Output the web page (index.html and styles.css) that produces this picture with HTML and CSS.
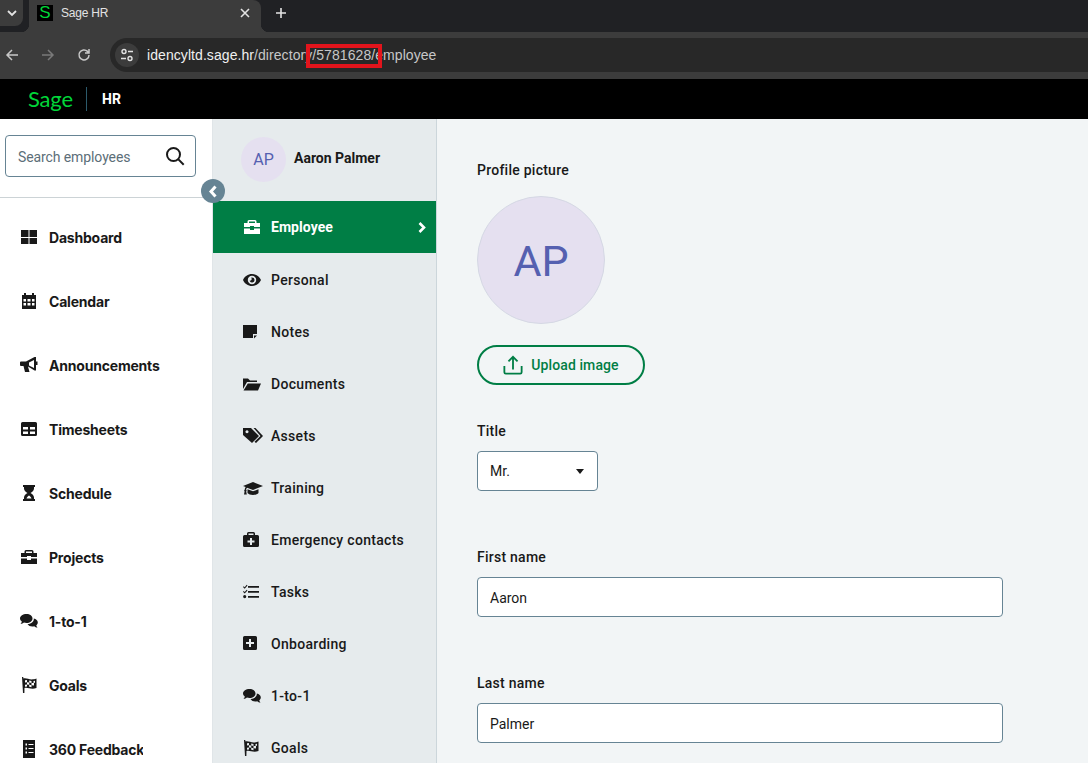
FILE: index.html
```html
<!DOCTYPE html>
<html lang="en">
<head>
<meta charset="utf-8">
<title>Sage HR</title>
<link rel="stylesheet" href="styles.css">
</head>
<body>
<div class="tabstrip">
  <div class="tabsearch"><svg width="12" height="12" viewBox="0 0 12 12"><path d="M2 4l4 4 4-4" fill="none" stroke="#e3e3e3" stroke-width="1.8"/></svg></div>
  <div class="tab">
    <span class="favicon">S</span>
    <span class="tabtitle">Sage HR</span>
    <svg class="tabclose" width="10" height="10" viewBox="0 0 10 10"><path d="M1 1l8 8M9 1l-8 8" stroke="#e3e3e3" stroke-width="1.6"/></svg>
  </div>
  <svg class="newtab" width="12" height="12" viewBox="0 0 12 12"><path d="M6 1v10M1 6h10" stroke="#e3e3e3" stroke-width="1.6"/></svg>
</div>
<div class="toolbar">
  <svg class="navicon" width="14" height="14" viewBox="0 0 14 14"><path d="M13 7H2M7 2L2 7l5 5" fill="none" stroke="#c7c7c7" stroke-width="1.5"/></svg>
  <svg class="navicon" width="14" height="14" viewBox="0 0 14 14"><path d="M1 7h11M7 2l5 5-5 5" fill="none" stroke="#7a7a7a" stroke-width="1.5"/></svg>
  <svg class="navicon" width="14" height="14" viewBox="0 0 14 14"><path d="M12 7a5 5 0 1 1-1.500-3.600L12 5M12 1v4H8" fill="none" stroke="#c7c7c7" stroke-width="1.500"/></svg>
  <div class="omnibox">
    <span class="sitechip"><svg width="14" height="14" viewBox="0 0 14 14"><g fill="none" stroke="#e3e3e3" stroke-width="1.400"><circle cx="4" cy="3.500" r="2"/><path d="M8 3.500h5M1 10.500h5"/><circle cx="10" cy="10.500" r="2"/></g></svg></span>
    <span class="url"><span class="domain">idencyltd.sage.hr</span>/directory/5781628/employee<span class="redact"></span></span>
  </div>
</div>
<header class="apphead">
  <span class="logo">Sage</span>
  <span class="logosep"></span>
  <span class="product">HR</span>
</header>
<div class="main">
  <aside class="sidebar">
    <div class="searchwrap">
      <div class="search">
        <span class="searchtext">Search employees</span>
        <svg width="20" height="20" viewBox="0 0 20 20"><circle cx="8.500" cy="8.500" r="6.500" fill="none" stroke="#191919" stroke-width="2"/><path d="M13.400 13.400l5.300 5.300" stroke="#191919" stroke-width="2"/></svg>
      </div>
    </div>
    <nav class="mainnav">
      <a class="mainitem"><svg class="ic" viewBox="0 0 18 18"><path d="M1 2h7.500v7h-7.500zM9.500 2H17v7H9.500zM1 10h7.500v6H1zM9.500 10H17v6H9.500z"/></svg>Dashboard</a>
      <a class="mainitem"><svg class="ic" viewBox="0 0 18 18"><path fill-rule="evenodd" d="M4 1h2v2h6V1h2v2h2v14H2V3h2zM3.500 7v2.500H6V7zM7.500 7v2.500H10.500V7zM12 7v2.500h2.500V7zM3.500 11v2.500H6V11zM7.500 11v2.500h3V11zM12 11v2.500h2.500V11z"/></svg>Calendar</a>
      <a class="mainitem"><svg class="ic" viewBox="0 0 18 18"><path fill-rule="evenodd" d="M0 6.500q0-1 1-1h5L14.500 1h1.500v4.500h1.500v3.500H16v5.500h-1.500L8 10.500l1.500 5.500H5l-1.500-6H1q-1 0-1-1zM9 6.500v3l5 2.500V4z"/></svg>Announcements</a>
      <a class="mainitem"><svg class="ic" viewBox="0 0 18 18"><path fill-rule="evenodd" d="M2.500 2h13Q17 2 17 3.500v11q0 1.500-1.500 1.500h-13Q1 16 1 14.500v-11Q1 2 2.500 2zM3 7v2.500h5V7zM10 7v2.500h5V7zM3 11.500V14h5v-2.500zM10 11.500V14h5v-2.500z"/></svg>Timesheets</a>
      <a class="mainitem"><svg class="ic" viewBox="0 0 18 18"><path d="M3 1h12v2h-1v1.500c0 2.500-2 3.500-3.500 4.500C12 10 14 11 14 13.500V15h1v2H3v-2h1v-1.500C4 11 6 10 7.500 9 6 8 4 7 4 4.500V3H3zM6.500 14.500h5C11 13 10 12 9 11.500 8 12 7 13 6.500 14.500z"/></svg>Schedule</a>
      <a class="mainitem"><svg class="ic" viewBox="0 0 18 18"><path fill-rule="evenodd" d="M6 2h6q1.500 0 1.500 1.500V5H17v4H11V8H7v1H1V5h3.500V3.500Q4.500 2 6 2zM6 3.500V5h6V3.500zM1 10.500h6V12h4v-1.500h6V16H1z"/></svg>Projects</a>
      <a class="mainitem"><svg class="ic" viewBox="0 0 18 18"><path d="M6.500 2C10 2 12.500 4 12.500 6.500S10 11 6.500 11c-1 0-1.800-.1-2.500-.4C3 11.500 2 12 .5 12c.8-.8 1.200-1.600 1.300-2.500C.7 8.700 0 7.700 0 6.500 0 4 3 2 6.500 2zM13.800 6.500c2.300.5 4 2 4 4 0 1.100-.6 2-1.500 2.800.1.800.5 1.500 1.200 2.200-1.400 0-2.400-.4-3.300-1.200-2.800.7-5.500-.2-6.700-2.300 3.500.2 6.800-2.500 6.300-5.500z"/></svg>1-to-1</a>
      <a class="mainitem"><svg class="ic" viewBox="0 0 18 18"><path fill-rule="evenodd" d="M2 1h1.200l.3 1.500C7 1.500 10 5 16.500 2.500v9.500C11 14 8 11 4.500 12l-.1 5H3zM5 4.200v2.300l2-.2V4.100zM7 6.300v2.200l2.200.3V6.500zM9.200 4.500v2l2.300.6V5.100zM11.500 7.100v2.200l2.500.2V7.100zM13.500 5v2.100l1.500-.3V4.700zM5 8.700v2l2-.2V8.500zM9.200 8.800v2l2.300.5V9.300z"/></svg>Goals</a>
      <a class="mainitem"><svg class="ic" viewBox="0 0 18 18"><path fill-rule="evenodd" d="M3 0h12v18H3zM5.500 3.500v2h1.500v-2zM8.500 4v1h5V4zM5.500 7.500v2h1.500v-2zM8.500 8v1h5V8zM5.500 11.500v2h1.500v-2zM8.500 12v1h5v-1z"/></svg><span class="clip">360 Feedback</span></a>
    </nav>
    <span class="collapse"><svg width="10" height="13" viewBox="0 0 10 13"><path d="M7.500 1.500L3 6.500l4.500 5" fill="none" stroke="#fff" stroke-width="3"/></svg></span>
  </aside>
  <aside class="subnav">
    <div class="person">
      <span class="avatar-sm">AP</span>
      <span class="personname">Aaron Palmer</span>
    </div>
    <a class="subitem active"><svg class="ic" viewBox="0 0 18 18"><path fill-rule="evenodd" d="M6 2h6q1.500 0 1.500 1.500V5H17v4H11V8H7v1H1V5h3.500V3.500Q4.500 2 6 2zM6 3.500V5h6V3.500zM1 10.500h6V12h4v-1.500h6V16H1z"/></svg>Employee<svg class="chev" width="8" height="11" viewBox="0 0 8 11"><path d="M1.500 1L6 5.500 1.500 10" fill="none" stroke="#fff" stroke-width="2.600"/></svg></a>
    <a class="subitem"><svg class="ic" viewBox="0 0 18 18"><path fill-rule="evenodd" d="M9 3c4 0 7.500 2.500 9 6-1.500 3.500-5 6-9 6s-7.500-2.500-9-6c1.500-3.500 5-6 9-6zM9 4.800A4.200 4.200 0 1 0 9 13.200 4.200 4.200 0 1 0 9 4.800zM9 6.500a2.500 2.500 0 1 1-2.400 3.100c.8.300 1.800-.2 2-1 .2-.7 0-1.400-.4-2z"/></svg>Personal</a>
    <a class="subitem"><svg class="ic" viewBox="0 0 18 18"><path d="M0 2h14v9h-4v4H0zM11 12.500h3L11 15.500z"/></svg>Notes</a>
    <a class="subitem"><svg class="ic" viewBox="0 0 18 18"><path d="M0 3.500h5l2 2h7V7H4L0 14zM4.800 8.500H18l-3 7H.5z"/></svg>Documents</a>
    <a class="subitem"><svg class="ic" viewBox="0 0 18 18"><path fill-rule="evenodd" d="M0 1h8l8 8-7 7L0 8zM4 3.300a1.500 1.500 0 1 0 .01 0zM10.500 1h2l7.500 8-7 7-1.500-1.200 6-5.800z"/></svg>Assets</a>
    <a class="subitem"><svg class="ic" viewBox="0 0 18 18"><path d="M10 3l10 4-10 4-6-2.300c-.5.6-.8 1.200-.9 2 .3.2.5.500.5.900 0 .3-.2.600-.4.800l.6 3H1l.6-3c-.2-.2-.4-.5-.4-.8 0-.4.2-.7.500-.9.1-1 .4-1.900 1-2.700L0 7zM4.500 10.300l5.500 2 5.500-2V14c-1 1.300-3 2-5.500 2s-4.500-.7-5.500-2z"/></svg>Training</a>
    <a class="subitem"><svg class="ic" viewBox="0 0 18 18"><path fill-rule="evenodd" d="M5.500 1h5q1.500 0 1.500 1.500V4h2.500Q16 4 16 5.500v9q0 1.500-1.500 1.500h-13Q0 16 0 14.500v-9Q0 4 1.500 4H4V2.500Q4 1 5.500 1zM5.500 2.500V4h5V2.500zM7 7v2.500H4.500v2H7V14h2v-2.500h2.500v-2H9V7z"/></svg>Emergency contacts</a>
    <a class="subitem"><svg class="ic" viewBox="0 0 18 18"><path d="M5 3h11v1.800H5zM5 8h11v1.800H5zM5 13h11v1.800H5zM.7 3.200l1 1L3.700 1.800l.8.7L1.700 5.800 0 4zM.7 8l1 1L3.700 6.700l.8.7L1.700 10.500 0 8.800zM1.700 12a1.600 1.600 0 1 1 0 3.200 1.600 1.600 0 1 1 0-3.200z"/></svg>Tasks</a>
    <a class="subitem"><svg class="ic" viewBox="0 0 18 18"><path fill-rule="evenodd" d="M1.500 1h11Q14 1 14 2.500v11q0 1.500-1.500 1.500h-11Q0 15 0 13.500v-11Q0 1 1.500 1zM6 4v3H3v2h3v3h2V9h3V7H8V4z"/></svg>Onboarding</a>
    <a class="subitem"><svg class="ic" viewBox="0 0 18 18"><path d="M6.500 2C10 2 12.500 4 12.500 6.500S10 11 6.500 11c-1 0-1.800-.1-2.500-.4C3 11.500 2 12 .5 12c.8-.8 1.200-1.600 1.300-2.500C.7 8.700 0 7.700 0 6.500 0 4 3 2 6.500 2zM13.800 6.500c2.300.5 4 2 4 4 0 1.100-.6 2-1.500 2.800.1.800.5 1.500 1.200 2.200-1.400 0-2.400-.4-3.300-1.200-2.800.7-5.500-.2-6.700-2.300 3.500.2 6.800-2.500 6.300-5.500z"/></svg>1-to-1</a>
    <a class="subitem"><svg class="ic" viewBox="0 0 18 18"><path fill-rule="evenodd" d="M1 1h1.200l.3 1.500C6 1.500 9 5 15.500 2.500v9.500C10 14 7 11 3.500 12l-.1 5H2zM4 4.200v2.300l2-.2V4.100zM6 6.300v2.200l2.200.3V6.500zM8.200 4.500v2l2.300.6V5.100zM10.500 7.100v2.200l2.500.2V7.100zM12.500 5v2.100l1.500-.3V4.700zM4 8.700v2l2-.2V8.500zM8.200 8.800v2l2.300.5V9.300z"/></svg>Goals</a>
  </aside>
  <main class="content">
    <div class="fieldlabel">Profile picture</div>
    <div class="avatar-lg">AP</div>
    <button class="upload" type="button"><svg width="20" height="20" viewBox="0 0 22 22"><path d="M1.500 12v7q0 1.500 1.500 1.500h16q1.500 0 1.500-1.500v-7M11 16V2.500M6 7l5-5 5 5" fill="none" stroke="#007e45" stroke-width="2"/></svg>Upload image</button>
    <div class="fieldlabel titlelabel">Title</div>
    <div class="selectbox"><span>Mr.</span><span class="caret"></span></div>
    <div class="fieldlabel namelabel">First name</div>
    <div class="textbox">Aaron</div>
    <div class="fieldlabel lastlabel">Last name</div>
    <div class="textbox">Palmer</div>
  </main>
</div>
</body>
</html>
```
FILE: styles.css
```css
* { box-sizing: border-box; }
html, body { margin: 0; height: 100%; overflow: hidden; }
body { width: 1088px; height: 763px; font-family: "Roboto", "Liberation Sans", sans-serif; color: #191919; background: #fff; display: flex; flex-direction: column; }
a { color: inherit; text-decoration: none; }

.tabstrip { height: 32px; background: #202124; display: flex; align-items: flex-start; flex: none; }
.tabsearch { width: 23px; height: 26px; background: #3c3c3c; border-radius: 0 0 8px 0; display: flex; align-items: center; justify-content: center; }
.tab { position: relative; width: 232px; height: 32px; margin-left: 6px; background: #3c3c3c; border-radius: 0 8px 0 0; display: flex; align-items: center; padding: 0 11px 6px 8px; }
.tab::before, .tab::after { content: ""; position: absolute; bottom: 0; width: 8px; height: 8px; }
.tab::before { left: -8px; background: radial-gradient(circle at 0 0, transparent 8px, #3c3c3c 8.500px); }
.tab::after { right: -8px; background: radial-gradient(circle at 100% 0, transparent 8px, #3c3c3c 8.500px); }
.favicon { width: 16px; height: 16px; background: #000; color: #00d639; font: 400 17px/16px "Liberation Sans Narrow", "Liberation Sans", sans-serif; text-align: center; flex: none; }
.tabtitle { margin-left: 8px; font: 12px "Liberation Sans", sans-serif; letter-spacing: -.2px; color: #e3e3e3; flex: 1; }
.newtab { margin: 7px 0 0 14px; }

.toolbar { height: 47px; background: #3c3c3c; display: flex; align-items: center; padding: 0 0 1px 5px; gap: 22px; flex: none; }
.omnibox { height: 34px; flex: 1; margin-left: -3px; background: #282828; border-radius: 17px 0 0 17px; display: flex; align-items: center; padding-left: 5px; }
.sitechip { width: 24px; height: 24px; border-radius: 50%; background: #3c3c3c; display: flex; align-items: center; justify-content: center; }
.url { position: relative; margin-left: 8px; font: 14px "Liberation Sans", sans-serif; letter-spacing: .07px; color: #c7c7c7; white-space: nowrap; }
.domain { color: #f0f0f0; }
.redact { position: absolute; left: 159px; top: -3px; width: 76px; height: 24px; border: 4px solid #e2141c; }

.apphead { height: 40px; background: #000; display: flex; align-items: center; padding-left: 28px; flex: none; }
.logo { font: 400 22px/1 "Lato", sans-serif; color: #00d639; width: 44px; letter-spacing: -.2px; }
.logosep { width: 1px; height: 24px; background: #2c5a6b; margin-left: 14px; }
.product { margin-left: 15px; font: 700 14px "Roboto", sans-serif; color: #fff; }

.main { flex: 1; min-height: 0; display: flex; overflow: hidden; }
.sidebar { position: relative; width: 213px; flex: none; background: #fff; border-right: 1px solid #e0e5e8; }
.searchwrap { height: 79px; border-bottom: 1px solid #ccd3d6; padding: 16px 16px 0 5px; }
.search { width: 191px; height: 42px; border: 1px solid #668494; border-radius: 4px; display: flex; align-items: center; justify-content: space-between; padding: 0 10px 0 12px; }
.searchtext { font-size: 14px; letter-spacing: -.1px; color: #5c6e78; padding-top: 2px; }
.mainnav { display: flex; flex-direction: column; padding-top: 7px; }
.mainitem { height: 64px; display: flex; align-items: center; padding-left: 20px; gap: 11px; font: 700 14px "Inter", sans-serif; letter-spacing: -.2px; color: #191919; white-space: nowrap; flex: none; }
.clip { width: 94px; overflow: hidden; }
.collapse { position: absolute; right: -13px; top: 60px; width: 24px; height: 24px; border-radius: 50%; background: #668494; display: flex; align-items: center; justify-content: center; z-index: 2; }
.ic { width: 18px; height: 18px; fill: #191919; flex: none; overflow: visible; }

.subnav { width: 224px; flex: none; background: #e6ebed; border-right: 1px solid #ccd6db; }
.person { height: 82px; display: flex; align-items: flex-start; padding: 18px 0 0 28px; gap: 8px; }
.avatar-sm { width: 45px; height: 45px; border-radius: 50%; background: #e5e0f0; color: #5560b0; font-size: 16px; display: flex; align-items: center; justify-content: center; }
.personname { font-size: 14px; font-weight: 700; letter-spacing: 0; margin-top: 13px; }
.subitem { height: 52px; display: flex; align-items: center; padding-left: 30px; gap: 10px; font-size: 14px; font-weight: 500; letter-spacing: .3px; white-space: nowrap; }
.subitem.active { background: #007e45; color: #fff; font-weight: 700; letter-spacing: .05px; margin-bottom: 1px; }
.subitem.active .ic { fill: #fff; }
.chev { margin-left: auto; margin-right: 10px; }

.content { flex: 1; background: #f2f5f6; padding: 42px 0 0 40px; display: flex; flex-direction: column; align-items: flex-start; }
.fieldlabel { font-size: 14px; font-weight: 500; letter-spacing: .25px; line-height: 18px; }
.avatar-lg { width: 128px; height: 128px; margin-top: 17px; border-radius: 50%; background: #e5e0f0; border: 1px solid #d5d8e4; color: #5560b0; font-size: 43px; display: flex; align-items: center; justify-content: center; padding-top: 2px; }
.upload { margin-top: 21px; width: 168px; height: 40px; border: 2px solid #007e45; border-radius: 20px; background: transparent; color: #007e45; font: 500 14px "Roboto", sans-serif; letter-spacing: .1px; display: flex; align-items: center; justify-content: center; gap: 8px; padding: 0; }
.titlelabel { margin-top: 37px; }
.selectbox { margin-top: 11px; width: 121px; height: 40px; background: #fff; border: 1px solid #668494; border-radius: 4px; display: flex; align-items: center; justify-content: space-between; padding: 0 13px 0 12px; font-size: 14px; }
.caret { width: 0; height: 0; border: 4px solid transparent; border-top: 5px solid #191919; border-bottom: 0; }
.namelabel { margin-top: 57px; }
.lastlabel { margin-top: 57px; }
.textbox { margin-top: 11px; width: 526px; height: 40px; background: #fff; border: 1px solid #668494; border-radius: 4px; display: flex; align-items: center; padding: 2px 12px 0; font-size: 14px; flex: none; }
```
